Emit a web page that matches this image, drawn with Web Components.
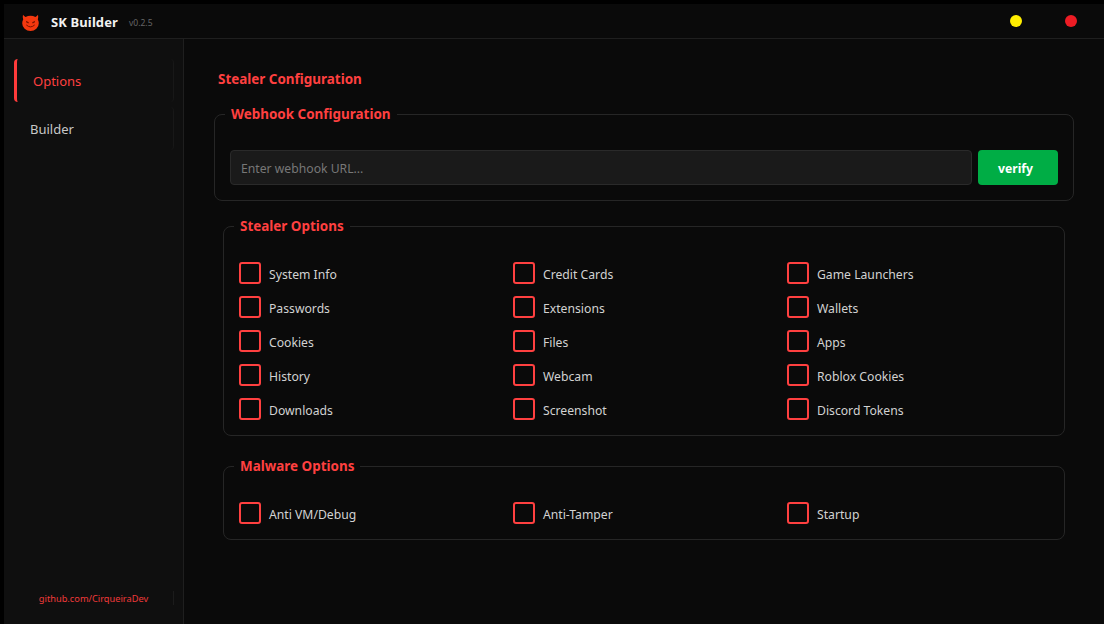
<!DOCTYPE html>
<html><head><meta charset="utf-8"><style>
html,body{margin:0;height:100%;background:#000}
body{font-family:"Noto Sans","Open Sans",sans-serif;overflow:hidden}
</style></head><body>
<sk-app></sk-app>
<script>
const def=(n,html)=>customElements.define(n,class extends HTMLElement{connectedCallback(){if(this.shadowRoot)return;const s=this.attachShadow({mode:'open'});s.innerHTML=html(this);}});
def('sk-titlebar',()=>`<style>
:host{display:flex;align-items:center;height:34px;border-bottom:1px solid #1f1f1f;background:#0a0a0a;padding-left:18px;color:#eee}
svg{width:17px;height:17px;display:block;margin-top:2px}
b{font-size:13px;font-weight:700;margin:2px 0 0 12px;color:#f2f2f2;letter-spacing:.12px}
small{font-size:8.5px;color:#666;margin-left:11px;margin-top:3px}
.sp{flex:1}
i{display:block;width:12px;height:12px;border-radius:50%}
.y{background:#ffee00;margin-right:43px}.r{background:#ed1c24;margin-right:27px}
</style>
<svg viewBox="0 0 17 17"><path d="M1 .8 Q2 2.2 3.6 3 Q5.8 1.7 8.5 1.7 Q11.2 1.7 13.4 3 Q15 2.2 16 .8 Q16.6 3.4 15.8 5.4 Q16.8 7.2 16.8 9.2 A8.3 7.8 0 0 1 .2 9.2 Q.2 7.2 1.2 5.4 Q.4 3.4 1 .8Z" fill="#f4380f"/><path d="M3.9 6.8l3 1.5-.5 1.3-2.1-1zM13.1 6.8l-3 1.5.5 1.3 2.1-1z" fill="#7a1400"/><path d="M4.6 11.2Q8.5 14.8 12.4 11.2" stroke="#7a1400" stroke-width="1" fill="none" stroke-linecap="round"/></svg>
<b>SK Builder</b><small>v0.2.5</small><span class="sp"></span><i class="y"></i><i class="r"></i>`);
def('sk-nav-item',e=>`<style>
:host{display:flex;align-items:center;height:43px;box-sizing:border-box;border-right:1px solid #181818;border-radius:0 4px 4px 0;font-size:13px;color:#c8c8c8;padding-left:16px}
:host([active]){border-left:3px solid #ff3b3b;border-radius:4px;color:#ff4040}
</style><slot></slot>`);
def('sk-sidebar',()=>`<style>
:host{display:flex;flex-direction:column;width:180px;box-sizing:border-box;border-right:1px solid #1f1f1f;background:#0f0f0f;padding:20px 9px 19px 10px}
.nav{display:flex;flex-direction:column;gap:5px}
.sp{flex:1}
.foot{display:flex;align-items:center;justify-content:center;height:14px;font-size:9.25px;color:#f03a3a;border-right:1px solid #1c1c1c}
</style><div class="nav"><slot></slot></div><span class="sp"></span><div class="foot">github.com/CirqueiraDev</div>`);
def('sk-group',e=>`<style>
:host{display:block;margin:${e.getAttribute('m')||'0'}}
fieldset{margin:0;border:1px solid #262626;border-radius:8px;padding:${e.getAttribute('p')||'0'};min-width:0}
legend{padding:0 6px;margin-left:-5px;color:#ff4040;font-size:13.45px;font-weight:700;line-height:18px}
</style><fieldset><legend>${e.getAttribute('label')}</legend><slot></slot></fieldset>`);
def('sk-check',()=>`<style>
:host{display:flex;align-items:center;gap:8px;height:22px;font-size:12.2px;color:#d2d2d2}
i{display:block;width:22px;height:22px;box-sizing:border-box;border:2px solid #ff4040;border-radius:3px;flex:none}
span{position:relative;top:1px}
</style><i></i><span><slot></slot></span>`);
def('sk-grid',()=>`<style>:host{display:grid;grid-template-columns:repeat(3,274px);grid-auto-rows:22px;row-gap:12px}</style><slot></slot>`);
def('sk-webhook',()=>`<style>
:host{display:flex;gap:6px}
input{flex:1;min-width:0;height:35px;box-sizing:border-box;background:#1a1a1a;border:1px solid #2a2a2a;border-radius:4px;padding:2px 10px 0;font:12.2px "Noto Sans",sans-serif;color:#ddd;outline:none}
input::placeholder{color:#777;opacity:1}
button{width:80px;height:35px;border:0;border-radius:4px;background:#00ad45;color:#fff;font:700 12.2px "Noto Sans",sans-serif;padding:2px 5px 0 0}
</style><input placeholder="Enter webhook URL..."><button>verify</button>`);
def('sk-main',()=>`<style>
:host{display:block;flex:1;min-width:0;background:#0a0a0a;padding:31px 30px 0 30px;box-sizing:border-box}
h1{margin:0 0 0 4px;font-size:13.45px;font-weight:700;color:#ff4040;line-height:18px}
</style><h1>Stealer Configuration</h1><slot></slot>`);
const boxes=[['System Info','Credit Cards','Game Launchers'],['Passwords','Extensions','Wallets'],['Cookies','Files','Apps'],['History','Webcam','Roblox Cookies'],['Downloads','Screenshot','Discord Tokens']].flat();
def('sk-app',()=>`<style>
:host{display:flex;flex-direction:column;width:1100px;height:620px;margin:4px 0 0 4px;overflow:hidden;font-family:"Noto Sans",sans-serif}
.body{display:flex;flex:1;min-height:0}
</style><sk-titlebar></sk-titlebar><div class="body">
<sk-sidebar><sk-nav-item active>Options</sk-nav-item><sk-nav-item>Builder</sk-nav-item></sk-sidebar>
<sk-main>
<sk-group label="Webhook Configuration" m="17px 0 0 0" p="27px 15px 15px 15px"><sk-webhook></sk-webhook></sk-group>
<sk-group label="Stealer Options" m="16px 9px 0 9px" p="27px 15px 15px 15px"><sk-grid>${boxes.map(b=>`<sk-check>${b}</sk-check>`).join('')}</sk-grid></sk-group>
<sk-group label="Malware Options" m="21px 9px 0 9px" p="27px 15px 15px 15px"><sk-grid>${['Anti VM/Debug','Anti-Tamper','Startup'].map(b=>`<sk-check>${b}</sk-check>`).join('')}</sk-grid></sk-group>
</sk-main></div>`);
</script></body></html>
